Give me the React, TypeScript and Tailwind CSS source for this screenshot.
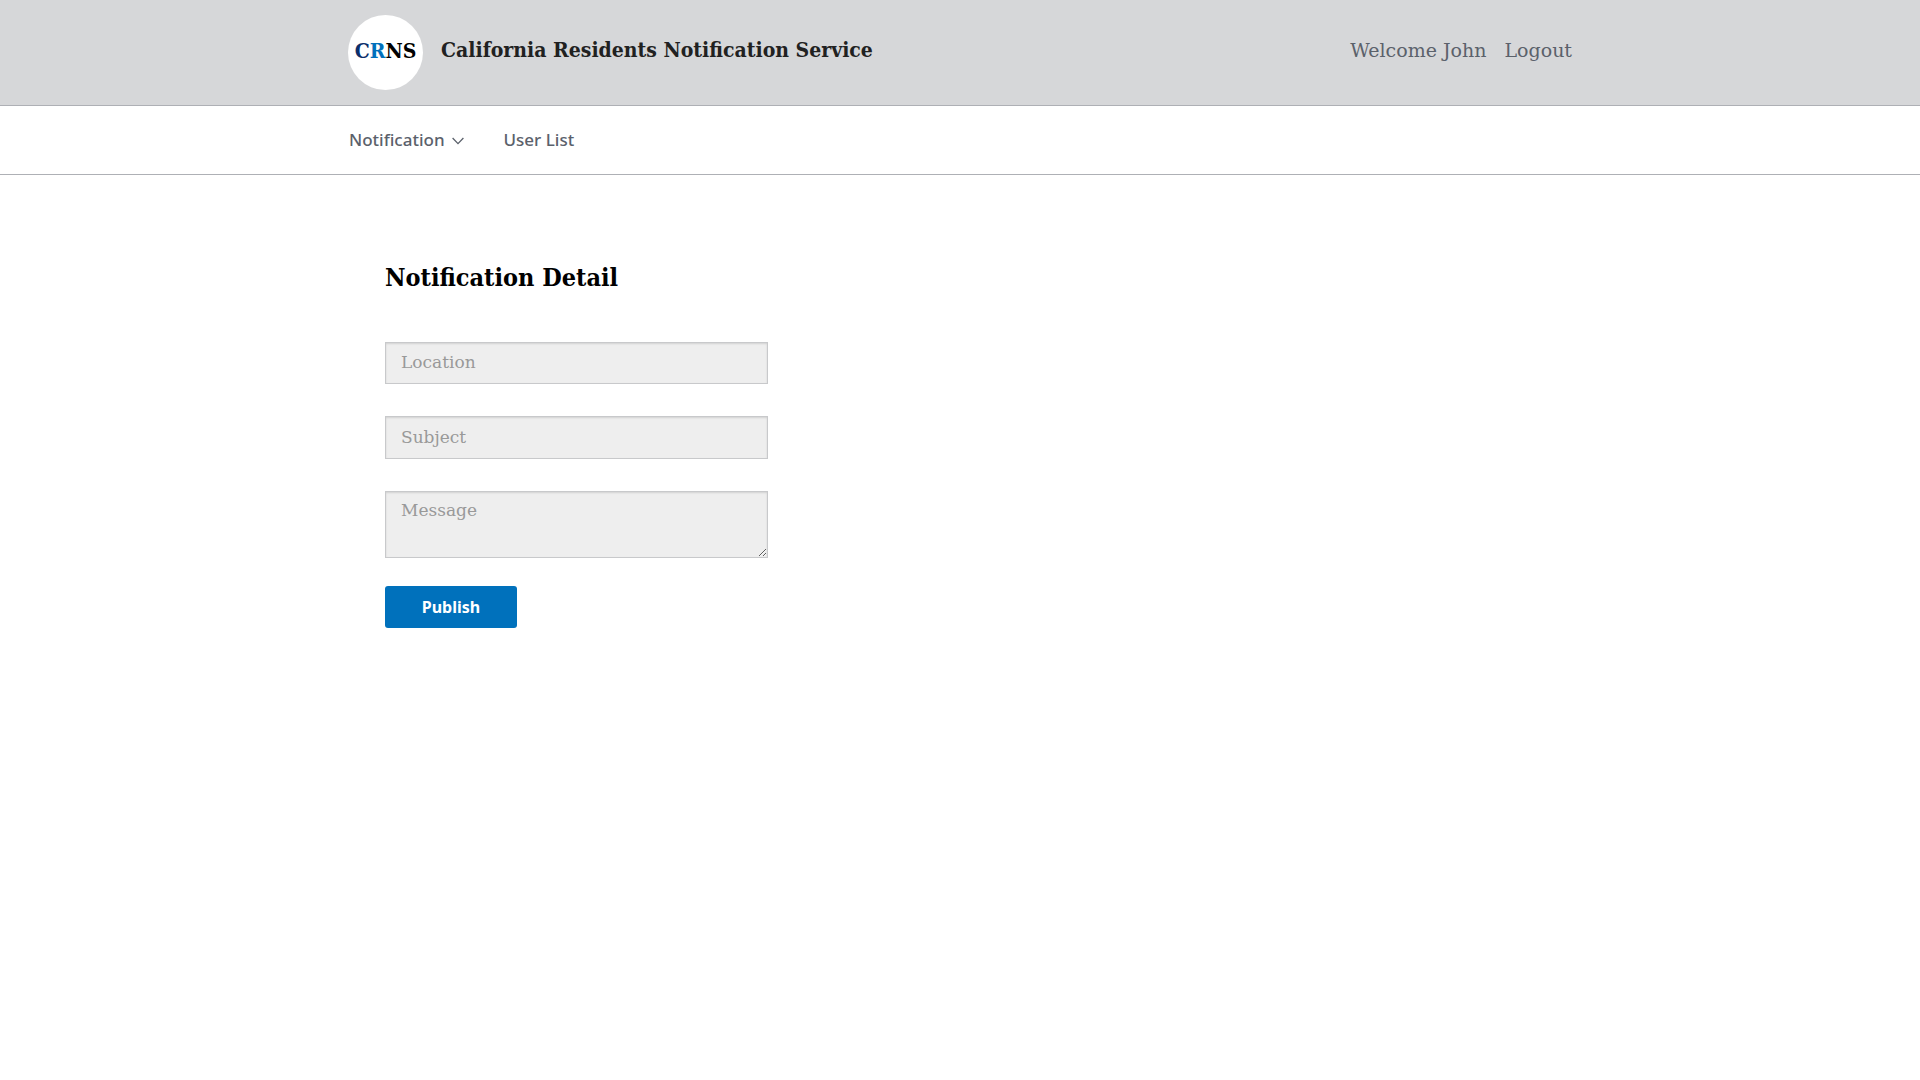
const serif = "font-['DejaVu_Serif',serif]";
const condensed = "font-['DejaVu_Serif_Condensed','DejaVu_Serif',serif]";
const sans = "font-['Noto_Sans',sans-serif]";
const field =
  'block w-full border border-[#c8c9cb] bg-[#eeeeee] px-[15px] text-[17px] leading-6 text-[#212121] shadow-[inset_0_1px_2px_rgba(0,0,0,0.12)] outline-none placeholder:text-[#999999] placeholder:opacity-100';

function Header() {
  return (
    <header className="border-b border-[#aeb0b5] bg-[#d6d7d9]">
      <div className="mx-auto flex max-w-[1224px] items-center justify-between py-[15px]">
        <a href="#" className={`flex items-center gap-[18px] text-[21px] leading-6 font-bold text-[#212121] ${condensed}`}>
          <span className="flex size-[75px] items-center justify-center rounded-full bg-white pb-1 text-black">
            <span className="text-[#0b2f6b]">C</span>
            <span className="text-[#0071bc]">R</span>
            <span>NS</span>
          </span>
          <span className="pb-1.5">California Residents Notification Service</span>
        </a>
        <div className="flex gap-[18px] pb-1.5 text-[19px] leading-6 text-[#5b616b]">
          <span>Welcome John</span>
          <a href="#">Logout</a>
        </div>
      </div>
    </header>
  );
}

function Nav() {
  return (
    <nav className={`border-b border-[#aeb0b5] ${sans}`}>
      <div className="mx-auto flex h-[68px] max-w-[1224px] items-center gap-10 px-px text-[17px] leading-6 font-medium text-[#5b616b]">
        <button type="button" className="flex items-center gap-[7px]">
          Notification
          <svg className="mt-0.5 h-2 w-3" viewBox="0 0 12 8" fill="none" stroke="currentColor" strokeWidth="1.3" aria-hidden="true">
            <path d="M0.6 1 L6 6.6 L11.4 1" />
          </svg>
        </button>
        <a href="#">User List</a>
      </div>
    </nav>
  );
}

export default function App() {
  return (
    <div className={`min-h-screen bg-white ${serif}`}>
      <Header />
      <Nav />
      <main className="mx-auto max-w-[1224px] px-[37px] pt-[87px]">
        <h1 className={`text-[25px] leading-8 font-bold text-black ${condensed}`}>Notification Detail</h1>
        <form className="mt-12 max-w-[383px]" onSubmit={(e) => e.preventDefault()}>
          <input type="text" aria-label="Location" placeholder="Location" className={`${field} h-[42px] pb-0.5`} />
          <input type="text" aria-label="Subject" placeholder="Subject" className={`${field} mt-8 h-[43px] pb-0.5`} />
          <textarea aria-label="Message" placeholder="Message" className={`${field} mt-8 h-[67px] resize py-1.5`} />
          <button
            type="submit"
            className={`mt-7 h-[42px] w-[132px] rounded-[3px] bg-[#0071bc] text-base leading-6 font-bold text-white ${sans}`}
          >
            Publish
          </button>
        </form>
      </main>
    </div>
  );
}
